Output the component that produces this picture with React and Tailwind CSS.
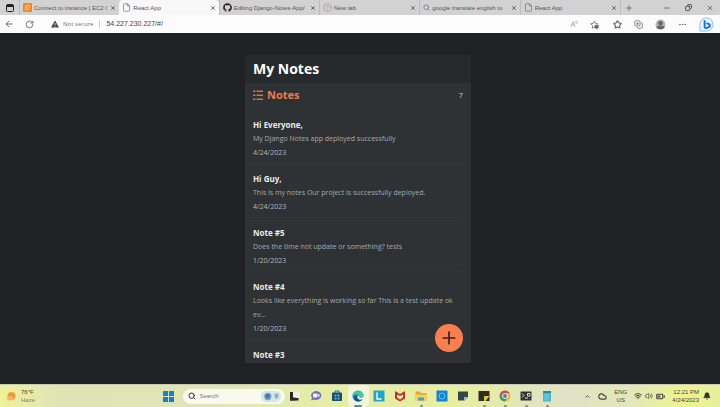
import React, { useState } from 'react';
import { ArrowLeft, RotateCw, File, X, Plus, Minus, Search, Copy, CircleHelp, Star, Ellipsis, ChevronUp, Cloud, Wifi, Volume2, BatteryMedium, Bell } from 'lucide-react';
import { FaGithub } from 'react-icons/fa';

const tabs = [
    { id: 1, title: 'Connect to instance | EC2 I', icon: 'aws' },
    { id: 2, title: 'React App', icon: 'file' },
    { id: 3, title: 'Editing Django-Notes-App/', icon: 'github' },
    { id: 4, title: 'New tab', icon: 'help' },
    { id: 5, title: 'google translate english to', icon: 'search' },
    { id: 6, title: 'React App', icon: 'file' },
];

const notes = [
    { id: 7, title: 'Hi Everyone,', body: 'My Django Notes app deployed successfully', date: '4/24/2023' },
    { id: 6, title: 'Hi Guy,', body: 'This is my notes Our project is successfully deployed.', date: '4/24/2023' },
    { id: 5, title: 'Note #5', body: 'Does the time not update or something? tests', date: '1/20/2023' },
    { id: 4, title: 'Note #4', body: 'Looks like everything is working so far This is a test update ok ev...', date: '1/20/2023' },
    { id: 3, title: 'Note #3' },
];

function TabIcon({ name }) {
    if (name === 'aws') {
        return (
            <svg viewBox="0 0 16 16" className="size-[9px] shrink-0">
                <rect width="16" height="16" rx="2" fill="#f08423" />
                <path d="M4 5v7h7M6.500 4h5v5h-5z" fill="none" stroke="#fbd9b4" strokeWidth="1.300" />
            </svg>
        );
    }
    if (name === 'github') return <FaGithub className="size-[9px] shrink-0 text-[#222]" />;
    if (name === 'help') return <CircleHelp className="size-[9px] shrink-0 text-[#999]" />;
    if (name === 'search') return <Search className="size-[7px] shrink-0 text-[#6c7fa5]" strokeWidth={3} />;
    return <File className="size-[9px] shrink-0 text-[#777]" />;
}

function BrowserTabs() {
    const [active, setActive] = useState(2);

    return (
        <div className="flex h-[15px] items-stretch bg-[#d2d2d2] text-[#555]">
            <button aria-label="Tab actions" className="flex w-[19px] shrink-0 items-center justify-center">
                <svg viewBox="0 0 16 16" className="size-[8px]">
                    <rect x="1" y="1" width="14" height="14" rx="2" fill="none" stroke="#222" strokeWidth="2" />
                    <path d="M1 2h14v4H1z" fill="#222" />
                </svg>
            </button>
            {tabs.map((tab) => (
                <div
                    key={tab.id}
                    className={`flex min-w-0 flex-1 items-center gap-[2px] px-[3px] ${tab.id === active ? 'rounded-t-sm bg-[#f8f8f8]' : 'border-l border-[#bcbcbc]'}`}
                >
                    <TabIcon name={tab.icon} />
                    <button onClick={() => setActive(tab.id)} className="min-w-0 flex-1 text-left font-['Liberation_Sans',sans-serif] text-[6px] leading-[14px] whitespace-nowrap">
                        {tab.title}
                    </button>
                    <button aria-label="Close tab">
                        <X className="size-[6px] text-[#444]" strokeWidth={3} />
                    </button>
                </div>
            ))}
            <div className="flex w-[100px] shrink-0 items-center justify-between border-l border-[#bcbcbc] pr-[6px] pl-[4px] text-[#444]">
                <button aria-label="New tab"><Plus className="size-[8px]" /></button>
                <div className="flex items-center gap-[14px]">
                    <button aria-label="Minimize"><Minus className="size-[8px]" /></button>
                    <button aria-label="Restore"><Copy className="size-[7px] -scale-x-100" strokeWidth={3} /></button>
                    <button aria-label="Close window"><X className="size-[8px]" /></button>
                </div>
            </div>
        </div>
    );
}

function StarPlus() {
    return (
        <svg viewBox="0 0 24 24" className="size-[9px]" fill="none" stroke="currentColor" strokeWidth="2">
            <path d="M12 19l-6 3 1-7-5-5 7-1 3-6 3 6 6 1-2 2" />
            <rect x="13" y="14" width="9" height="8" rx="2" fill="currentColor" />
        </svg>
    );
}

function AddressBar() {
    return (
        <div className="flex h-[18px] items-center bg-[#fcfcfc] pr-[6px] pl-[4px] text-[#555]">
            <button aria-label="Back"><ArrowLeft className="size-[10px]" /></button>
            <button aria-label="Refresh" className="ml-[11px]"><RotateCw className="size-[9px]" /></button>
            <svg viewBox="0 0 16 16" className="ml-[17px] size-[8px] shrink-0">
                <path d="M8 1l8 14H0z" fill="#444" />
                <path d="M8 6v4M8 11.500v2" stroke="#fff" strokeWidth="1.500" />
            </svg>
            <span className="ml-[4px] text-[6px] whitespace-nowrap text-[#777]">Not secure</span>
            <span className="mx-[6px] h-[8px] w-px bg-[#ccc]" />
            <input
                aria-label="Address"
                defaultValue="54.227.230.227/#/"
                className="min-w-0 flex-1 bg-transparent font-['Liberation_Sans',sans-serif] text-[7px] text-[#444] outline-none"
            />
            <div className="flex items-center gap-[12px] text-[#666]">
                <button aria-label="Read aloud">
                    <svg viewBox="0 0 24 24" className="size-[8px]" fill="none" stroke="#999" strokeWidth="2">
                        <path d="M2 21L9 5l6 16M5 15h8M15 4q3 2 2 6M19 2q4 4 2 10" />
                    </svg>
                </button>
                <button aria-label="Add to favorites"><StarPlus /></button>
                <button aria-label="Favorites" className="ml-[2px]"><Star className="size-[9px]" strokeWidth={3} /></button>
                <button aria-label="Collections">
                    <svg viewBox="0 0 24 24" className="size-[9px]" fill="none" stroke="currentColor" strokeWidth="2">
                        <rect x="2" y="2" width="14" height="14" rx="3" />
                        <path d="M19 7q3 0 3 3v9q0 3-3 3h-8q-3 0-3-3M9 6v7M6 10h7" />
                    </svg>
                </button>
                <button aria-label="Profile">
                    <svg viewBox="0 0 24 24" className="size-[11px]">
                        <circle cx="12" cy="12" r="11" fill="#b7b7b7" />
                        <circle cx="12" cy="9" r="5" fill="#666" />
                        <path d="M3 19q1-5 9-5t9 5q-8 8-18 0" fill="#666" />
                    </svg>
                </button>
                <button aria-label="Settings"><Ellipsis className="size-[9px]" /></button>
                <button aria-label="Bing">
                    <svg viewBox="0 0 32 32" className="size-[15px]">
                        <path d="M2 30V16A14 14 0 1 1 16 30z" fill="#e9f4fd" stroke="#86bdea" strokeWidth="2" />
                        <path d="M12 7v15l4 2 7-4v-4l-7-3" fill="none" stroke="#1670d2" strokeWidth="4" strokeLinejoin="round" />
                    </svg>
                </button>
            </div>
        </div>
    );
}

function NotesApp() {
    return (
        <div className="relative flex h-full w-[226px] flex-col overflow-hidden bg-[#2e3235] font-['Open_Sans',sans-serif]">
            <h1 className="h-[28px] shrink-0 bg-[#272a2d] px-2 text-[14px] leading-[28px] font-bold text-white">My Notes</h1>
            <div className="flex h-[26px] shrink-0 items-center justify-between px-2 pb-[2px]">
                <h2 className="flex items-center gap-1 text-[11px] leading-4 font-bold text-[#ec7a4f]">
                    <svg viewBox="0 0 20 20" className="size-[10px]" fill="#d9704a">
                        <path d="M0 1h5v3H0zM7 1h13v3H7zM0 9h5v3H0zM7 9h13v3H7zM0 17h5v3H0zM7 17h13v3H7z" />
                    </svg>
                    Notes
                </h2>
                <p className="text-[8px] text-[#c0c2c3]">7</p>
            </div>
            <div className="min-h-0 flex-1 overflow-hidden pr-2">
                {notes.map((note) => (
                    <a key={note.id} href={`#/note/${note.id}`} className="block border-t border-[#313538] pt-2 pb-[3px] pl-2 first:border-transparent">
                        <h3 className="text-[8px] leading-[14px] font-bold text-[#e9eaea]">{note.title}</h3>
                        <p className="text-[7px] leading-[14px] text-[#a6a9ab]">{note.body}</p>
                        <p className="text-[7px] leading-[14px] text-[#b6b8ba]">{note.date}</p>
                    </a>
                ))}
            </div>
            <a href="#/note/new" aria-label="Add note" className="absolute right-2 bottom-[11px] flex size-[28px] items-center justify-center rounded-full bg-[#fa7f50]">
                <Plus className="size-[20px] text-[#3a211a]" strokeWidth={2} />
            </a>
        </div>
    );
}

const apps = [
    {
        name: 'Task view',
        art: <><path d="M2 4h11v17H2z" fill="#292929" /><path d="M8 3h14v12H8z" fill="#eef0e8" /><path d="M2 16h17v5H2z" fill="#292929" /></>,
    },
    {
        name: 'Chat',
        art: <><path d="M12 2a10 9 0 1 1-4 17l-6 2 2-5A10 9 0 0 1 12 2" fill="#7670b9" /><rect x="6" y="7" width="9" height="8" rx="2" fill="#f4f1ff" /><path d="M15 10l4-2v6l-4-2z" fill="#f4f1ff" /></>,
    },
    {
        name: 'Store',
        art: <><path d="M8 6V2h8v4" fill="none" stroke="#226887" strokeWidth="2" /><rect x="2" y="5" width="20" height="17" rx="2" fill="#174d70" /><path d="M7 9h4v4H7zM13 9h4v4h-4zM7 15h4v4H7zM13 15h4v4h-4z" fill="#55b3c9" /></>,
    },
    {
        name: 'Edge',
        active: true,
        art: <><circle cx="12" cy="12" r="11" fill="#177fc0" /><path d="M1 12C2 0 20-2 23 10c0 6-7 7-9 4 2-3-1-6-5-5-4 0-7 2-8 3" fill="#43c9a5" /><path d="M10 11c-3 5 2 11 11 8-4 5-13 6-16-1-2-5 3-7 5-7" fill="#095594" /><path d="M14 14c2 3 7 2 9-1v4c-5 4-11 2-12-2 0-2 0-3 2-4 2 0 2 2 1 3" fill="#fff" /></>,
    },
    {
        name: 'Lenovo',
        art: <><rect x="1" y="1" width="22" height="22" fill="#24a6c8" /><path d="M8 5v13h9" fill="none" stroke="#e5faff" strokeWidth="3" /></>,
    },
    {
        name: 'McAfee',
        art: <path d="M2 2v15l10 6 10-6V2l-10 6zM6 9l6 3 6-3v6l-6 4-6-4z" fill="#c32f2a" fillRule="evenodd" />,
    },
    {
        name: 'Files',
        open: true,
        art: <><path d="M1 3h8l3 3h11v15H1z" fill="#e0a63b" /><path d="M1 9h22v12H1z" fill="#f6cf60" /><path d="M6 15h12v6H6z" fill="#4b9bc9" /></>,
    },
    {
        name: 'Support',
        art: <><rect x="1" y="1" width="22" height="22" rx="1" fill="#1482d3" /><circle cx="12" cy="12" r="6" fill="none" stroke="#59c6f5" strokeWidth="2" /></>,
    },
    {
        name: 'Notes widget',
        art: <><path d="M2 3h20v11l-7 7H2z" fill="#39454d" /><path d="M14 14h8l-8 8z" fill="#98c0cf" /></>,
    },
    {
        name: 'Sticky notes',
        open: true,
        art: <><path d="M1 2h22v20H1z" fill="#302e23" /><path d="M12 12h11l-8 10h-3z" fill="#e5c53d" /></>,
    },
    {
        name: 'Chrome',
        open: true,
        art: <><circle cx="12" cy="12" r="11" fill="#e9bd38" /><path d="M2.500 6.500A11 11 0 0 1 21.500 6.500H12L7.200 15z" fill="#dc4c3b" /><path d="M2.500 6.500A11 11 0 0 0 12 23l5-8.500-5 3-5-3z" fill="#439b55" /><circle cx="12" cy="12" r="5.500" fill="#fff" /><circle cx="12" cy="12" r="4" fill="#427fd1" /></>,
    },
    {
        name: 'Terminal',
        open: true,
        art: <><rect x="1" y="3" width="22" height="18" rx="1" fill="#303437" /><path d="M4 7l4 4-4 4M10 16h6M15 7h5v5h-5z" fill="none" stroke="#ddd" strokeWidth="2" /></>,
    },
    {
        name: 'Notepad',
        open: true,
        art: <><path d="M4 2h16v21H4z" fill="#4eb7d0" /><path d="M4 2h16v4H4z" fill="#3c839b" /><path d="M7 10h10M7 14h10M7 18h7" stroke="#87dae8" strokeWidth="1.500" /></>,
    },
];

function Taskbar() {
    return (
        <div className="grid h-[23px] shrink-0 grid-cols-[1fr_auto_1fr] items-center border-t border-[#c9cbb0] bg-[linear-gradient(90deg,#eef29a_0%,#e0e4b4_8%,#dfe5b8_30%,#e6eda6_45%,#e8eda2_65%,#dfe2c6_78%,#e3e8b8_88%,#edf48e_95%,#e9ee9e_100%)] text-[#444]">
            <div className="flex items-center gap-1 pl-[6px]">
                <svg viewBox="0 0 24 24" className="size-[11px]">
                    <circle cx="12" cy="11" r="9" fill="#ef9c35" />
                    <path d="M4 20a4 4 0 0 1 1-7 6 6 0 0 1 10 2 3 3 0 0 1 1 5z" fill="#f1b767" />
                </svg>
                <div className="font-['Liberation_Sans',sans-serif] text-[6px] leading-[8px]">
                    <p>76°F</p>
                    <p className="text-[#85866b]">Haze</p>
                </div>
            </div>

            <div className="flex items-center">
                <button aria-label="Start" className="mr-[9px]">
                    <svg viewBox="0 0 24 24" className="size-[11px]" fill="#167fc5">
                        <path d="M0 0h11v11H0zM13 0h11v11H13zM0 13h11v11H0zM13 13h11v11H13z" />
                    </svg>
                </button>
                <label className="flex h-[15px] w-[102px] items-center gap-1 rounded-full bg-[#f8faed] pr-1 pl-[5px]">
                    <Search className="size-[8px] shrink-0 text-[#333]" strokeWidth={3} />
                    <input aria-label="Search" placeholder="Search" className="min-w-0 flex-1 bg-transparent font-['Liberation_Sans',sans-serif] text-[6px] outline-none placeholder:text-[#777]" />
                    <svg viewBox="0 0 44 24" className="h-[11px] w-[20px] shrink-0">
                        <rect width="44" height="24" rx="11" fill="#d3e7e9" />
                        <circle cx="15" cy="12" r="8" fill="#7b9dc2" />
                        <path d="M10 9l5-3 5 4-3 6-6-1z" fill="#4d70a0" />
                        <path d="M30 6h8v7l-4 5-4-5z" fill="#84b6b1" />
                    </svg>
                </label>
                {apps.map((app) => (
                    <button
                        key={app.name}
                        aria-label={app.name}
                        className={`relative flex h-[22px] w-[21px] items-center justify-center ${app.active ? 'rounded-sm bg-[#f2f5d8]' : ''}`}
                    >
                        <svg viewBox="0 0 24 24" className="size-[12px]">{app.art}</svg>
                        {app.active && <span className="absolute bottom-0 h-[2px] w-[8px] rounded-full bg-[#4f8eae]" />}
                        {app.open && <span className="absolute bottom-0 h-[2px] w-[3px] rounded-full bg-[#8b8d6c]" />}
                    </button>
                ))}
            </div>

            <div className="flex items-center justify-end pr-[9px]">
                <ChevronUp className="size-[7px]" strokeWidth={3} />
                <Cloud className="ml-[7px] size-[9px]" strokeWidth={3} />
                <p className="ml-[7px] text-center font-['Liberation_Sans',sans-serif] text-[6px] leading-[8px]">ENG<br />US</p>
                <Wifi className="ml-[7px] size-[8px]" strokeWidth={3} />
                <Volume2 className="ml-[3px] size-[8px]" />
                <BatteryMedium className="ml-[3px] size-[9px]" strokeWidth={3} />
                <div className="ml-[7px] text-right font-['Liberation_Sans',sans-serif] text-[6px] leading-[8px] whitespace-nowrap">
                    <p>12:21 PM</p>
                    <p>4/24/2023</p>
                </div>
                <Bell className="ml-[4px] size-[8px] fill-[#333] text-[#333]" />
            </div>
        </div>
    );
}

export default function App() {
    return (
        <div className="flex h-screen flex-col overflow-hidden bg-[#1f2124] font-['Open_Sans',sans-serif]">
            <header className="shrink-0">
                <BrowserTabs />
                <AddressBar />
            </header>
            <main className="flex min-h-0 flex-1 justify-center pt-[22px] pr-1 pb-[21px]">
                <NotesApp />
            </main>
            <Taskbar />
        </div>
    );
}
